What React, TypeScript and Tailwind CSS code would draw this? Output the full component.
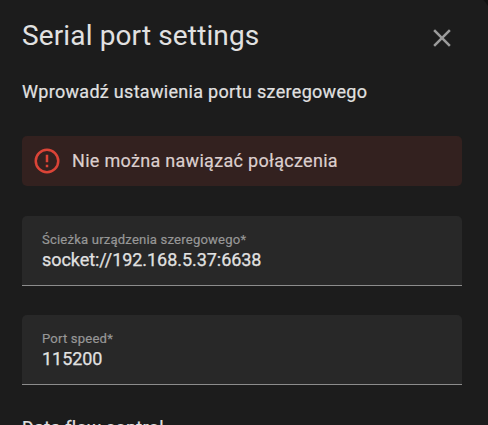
const CLOSE =
  'M19,6.41L17.59,5L12,10.59L6.41,5L5,6.41L10.59,12L5,17.59L6.41,19L12,13.41L17.59,19L19,17.59L13.41,12L19,6.41Z';
const ALERT =
  'M11,15H13V17H11V15M11,7H13V13H11V7M12,2C6.47,2 2,6.5 2,12A10,10 0 0,0 12,22A10,10 0 0,0 22,12A10,10 0 0,0 12,2M12,20A8,8 0 0,1 4,12A8,8 0 0,1 12,4A8,8 0 0,1 20,12A8,8 0 0,1 12,20Z';

function Icon({ path, className }: { path: string; className: string }) {
  return (
    <svg viewBox="0 0 24 24" className={`size-[30px] shrink-0 fill-current ${className}`}>
      <path d={path} />
    </svg>
  );
}

function Field({ label, value }: { label: string; value: string }) {
  return (
    <label className="flex h-[70px] flex-col rounded-t-[5px] border-b border-[#8c8c8c] bg-[#282828] px-5 pt-[14px]">
      <span className="h-5 whitespace-nowrap text-[13.125px] leading-5 tracking-[0.18px] text-[#979797] [-webkit-text-stroke:0.2px]">{label}</span>
      <span className="h-5 whitespace-nowrap text-[18px] leading-5 tracking-[-0.05px] text-[#e1e1e1] [-webkit-text-stroke:0.25px]">{value}</span>
    </label>
  );
}

export default function App() {
  return (
    <div className="flex h-[425px] w-[488px] items-start overflow-hidden bg-[#121212] font-[Roboto,sans-serif] text-[#e1e1e1]">
      <div className="-mt-[11px] h-[460px] w-[493px] shrink-0 rounded-tr-[35px] bg-[#1c1c1c] pt-[11px] pr-[31px] pl-[22px]">
        <header className="flex h-[76px] items-start justify-between">
          <h1 className="mt-4 whitespace-nowrap text-[28px] leading-10 tracking-[0.13px]">Serial port settings</h1>
          <button className="mt-[23px] mr-[5px] text-[#9b9b9b]" aria-label="Close">
            <Icon path={CLOSE} className="block" />
          </button>
        </header>
        <p className="h-[60px] whitespace-nowrap pt-px text-[18px] leading-[30px] tracking-[0.3px] [-webkit-text-stroke:0.2px]">
          Wprowadź ustawienia portu szeregowego
        </p>
        <div className="flex h-[50px] items-center gap-[10px] rounded-[5px] bg-[#33211f] pl-[10px]">
          <Icon path={ALERT} className="text-[#db4437]" />
          <span className="whitespace-nowrap pb-0.5 text-[18px] tracking-[0.3px] text-[#dccfce] [-webkit-text-stroke:0.2px]">Nie można nawiązać połączenia</span>
        </div>
        <div className="mt-[30px] flex flex-col gap-[29px]">
          <Field label="Ścieżka urządzenia szeregowego*" value="socket://192.168.5.37:6638" />
          <Field label="Port speed*" value="115200" />
        </div>
        <p className="mt-[28px] whitespace-nowrap text-[18px] leading-[30px] tracking-[0.31px] [-webkit-text-stroke:0.2px]">Data flow control</p>
      </div>
    </div>
  );
}
